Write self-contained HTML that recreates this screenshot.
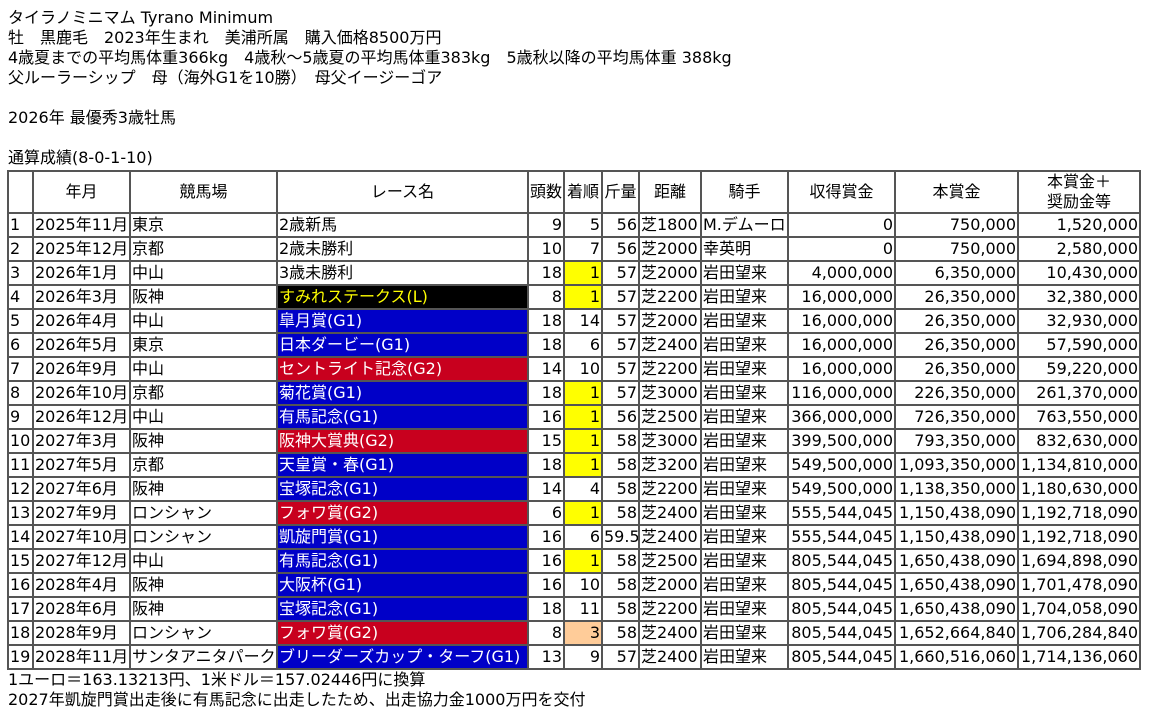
<!DOCTYPE html>
<html><head><meta charset="utf-8">
<style>
body{margin:8px;font-family:"DejaVu Sans","Noto Sans CJK JP",sans-serif;font-size:16px;line-height:20px;color:#000;background:#fff;}
p{margin:0}
table{border-collapse:collapse;table-layout:fixed;width:1133px;margin-left:-1px;margin-top:2px;border:2px solid #555;}
td,th{border:2px solid #555;padding:0 1px;height:22px;font-weight:normal;white-space:nowrap;overflow:hidden;line-height:20px;}
th{height:39px;text-align:center;}
.r{text-align:right}
.y{background:#ff0}
.o{background:#fc9}
.b{background:#0000c8;color:#fff}
.d{background:#c8001e;color:#fff}
.k{background:#000;color:#ff0}
</style></head><body>
<p>タイラノミニマム Tyrano Minimum</p>
<p>牡　黒鹿毛　2023年生まれ　美浦所属　購入価格8500万円</p>
<p>4歳夏までの平均馬体重366kg　4歳秋～5歳夏の平均馬体重383kg　5歳秋以降の平均馬体重 388kg</p>
<p>父ルーラーシップ　母（海外G1を10勝）　母父イージーゴア</p>
<p>&nbsp;</p>
<p>2026年 最優秀3歳牡馬</p>
<p>&nbsp;</p>
<p>通算成績(8-0-1-10)</p>
<table>
<colgroup><col style="width:25px"><col style="width:97px"><col style="width:147px"><col style="width:251px"><col style="width:36px"><col style="width:38px"><col style="width:37px"><col style="width:62px"><col style="width:87px"><col style="width:107px"><col style="width:123px"><col style="width:122px"></colgroup>
<tr><th></th><th>年月</th><th>競馬場</th><th>レース名</th><th>頭数</th><th>着順</th><th>斤量</th><th>距離</th><th>騎手</th><th>収得賞金</th><th>本賞金</th><th>本賞金＋<br>奨励金等</th></tr>
<tr><td>1</td><td>2025年11月</td><td>東京</td><td>2歳新馬</td><td class="r">9</td><td class="r">5</td><td class="r">56</td><td>芝1800</td><td>M.デムーロ</td><td class="r">0</td><td class="r">750,000</td><td class="r">1,520,000</td></tr>
<tr><td>2</td><td>2025年12月</td><td>京都</td><td>2歳未勝利</td><td class="r">10</td><td class="r">7</td><td class="r">56</td><td>芝2000</td><td>幸英明</td><td class="r">0</td><td class="r">750,000</td><td class="r">2,580,000</td></tr>
<tr><td>3</td><td>2026年1月</td><td>中山</td><td>3歳未勝利</td><td class="r">18</td><td class="r y">1</td><td class="r">57</td><td>芝2000</td><td>岩田望来</td><td class="r">4,000,000</td><td class="r">6,350,000</td><td class="r">10,430,000</td></tr>
<tr><td>4</td><td>2026年3月</td><td>阪神</td><td class="k">すみれステークス(L)</td><td class="r">8</td><td class="r y">1</td><td class="r">57</td><td>芝2200</td><td>岩田望来</td><td class="r">16,000,000</td><td class="r">26,350,000</td><td class="r">32,380,000</td></tr>
<tr><td>5</td><td>2026年4月</td><td>中山</td><td class="b">皐月賞(G1)</td><td class="r">18</td><td class="r">14</td><td class="r">57</td><td>芝2000</td><td>岩田望来</td><td class="r">16,000,000</td><td class="r">26,350,000</td><td class="r">32,930,000</td></tr>
<tr><td>6</td><td>2026年5月</td><td>東京</td><td class="b">日本ダービー(G1)</td><td class="r">18</td><td class="r">6</td><td class="r">57</td><td>芝2400</td><td>岩田望来</td><td class="r">16,000,000</td><td class="r">26,350,000</td><td class="r">57,590,000</td></tr>
<tr><td>7</td><td>2026年9月</td><td>中山</td><td class="d">セントライト記念(G2)</td><td class="r">14</td><td class="r">10</td><td class="r">57</td><td>芝2200</td><td>岩田望来</td><td class="r">16,000,000</td><td class="r">26,350,000</td><td class="r">59,220,000</td></tr>
<tr><td>8</td><td>2026年10月</td><td>京都</td><td class="b">菊花賞(G1)</td><td class="r">18</td><td class="r y">1</td><td class="r">57</td><td>芝3000</td><td>岩田望来</td><td class="r">116,000,000</td><td class="r">226,350,000</td><td class="r">261,370,000</td></tr>
<tr><td>9</td><td>2026年12月</td><td>中山</td><td class="b">有馬記念(G1)</td><td class="r">16</td><td class="r y">1</td><td class="r">56</td><td>芝2500</td><td>岩田望来</td><td class="r">366,000,000</td><td class="r">726,350,000</td><td class="r">763,550,000</td></tr>
<tr><td>10</td><td>2027年3月</td><td>阪神</td><td class="d">阪神大賞典(G2)</td><td class="r">15</td><td class="r y">1</td><td class="r">58</td><td>芝3000</td><td>岩田望来</td><td class="r">399,500,000</td><td class="r">793,350,000</td><td class="r">832,630,000</td></tr>
<tr><td>11</td><td>2027年5月</td><td>京都</td><td class="b">天皇賞・春(G1)</td><td class="r">18</td><td class="r y">1</td><td class="r">58</td><td>芝3200</td><td>岩田望来</td><td class="r">549,500,000</td><td class="r">1,093,350,000</td><td class="r">1,134,810,000</td></tr>
<tr><td>12</td><td>2027年6月</td><td>阪神</td><td class="b">宝塚記念(G1)</td><td class="r">14</td><td class="r">4</td><td class="r">58</td><td>芝2200</td><td>岩田望来</td><td class="r">549,500,000</td><td class="r">1,138,350,000</td><td class="r">1,180,630,000</td></tr>
<tr><td>13</td><td>2027年9月</td><td>ロンシャン</td><td class="d">フォワ賞(G2)</td><td class="r">6</td><td class="r y">1</td><td class="r">58</td><td>芝2400</td><td>岩田望来</td><td class="r">555,544,045</td><td class="r">1,150,438,090</td><td class="r">1,192,718,090</td></tr>
<tr><td>14</td><td>2027年10月</td><td>ロンシャン</td><td class="b">凱旋門賞(G1)</td><td class="r">16</td><td class="r">6</td><td class="r">59.5</td><td>芝2400</td><td>岩田望来</td><td class="r">555,544,045</td><td class="r">1,150,438,090</td><td class="r">1,192,718,090</td></tr>
<tr><td>15</td><td>2027年12月</td><td>中山</td><td class="b">有馬記念(G1)</td><td class="r">16</td><td class="r y">1</td><td class="r">58</td><td>芝2500</td><td>岩田望来</td><td class="r">805,544,045</td><td class="r">1,650,438,090</td><td class="r">1,694,898,090</td></tr>
<tr><td>16</td><td>2028年4月</td><td>阪神</td><td class="b">大阪杯(G1)</td><td class="r">16</td><td class="r">10</td><td class="r">58</td><td>芝2000</td><td>岩田望来</td><td class="r">805,544,045</td><td class="r">1,650,438,090</td><td class="r">1,701,478,090</td></tr>
<tr><td>17</td><td>2028年6月</td><td>阪神</td><td class="b">宝塚記念(G1)</td><td class="r">18</td><td class="r">11</td><td class="r">58</td><td>芝2200</td><td>岩田望来</td><td class="r">805,544,045</td><td class="r">1,650,438,090</td><td class="r">1,704,058,090</td></tr>
<tr><td>18</td><td>2028年9月</td><td>ロンシャン</td><td class="d">フォワ賞(G2)</td><td class="r">8</td><td class="r o">3</td><td class="r">58</td><td>芝2400</td><td>岩田望来</td><td class="r">805,544,045</td><td class="r">1,652,664,840</td><td class="r">1,706,284,840</td></tr>
<tr><td>19</td><td>2028年11月</td><td>サンタアニタパーク</td><td class="b">ブリーダーズカップ・ターフ(G1)</td><td class="r">13</td><td class="r">9</td><td class="r">57</td><td>芝2400</td><td>岩田望来</td><td class="r">805,544,045</td><td class="r">1,660,516,060</td><td class="r">1,714,136,060</td></tr>
</table>
<p>1ユーロ＝163.13213円、1米ドル＝157.02446円に換算</p>
<p>2027年凱旋門賞出走後に有馬記念に出走したため、出走協力金1000万円を交付</p>
</body></html>
